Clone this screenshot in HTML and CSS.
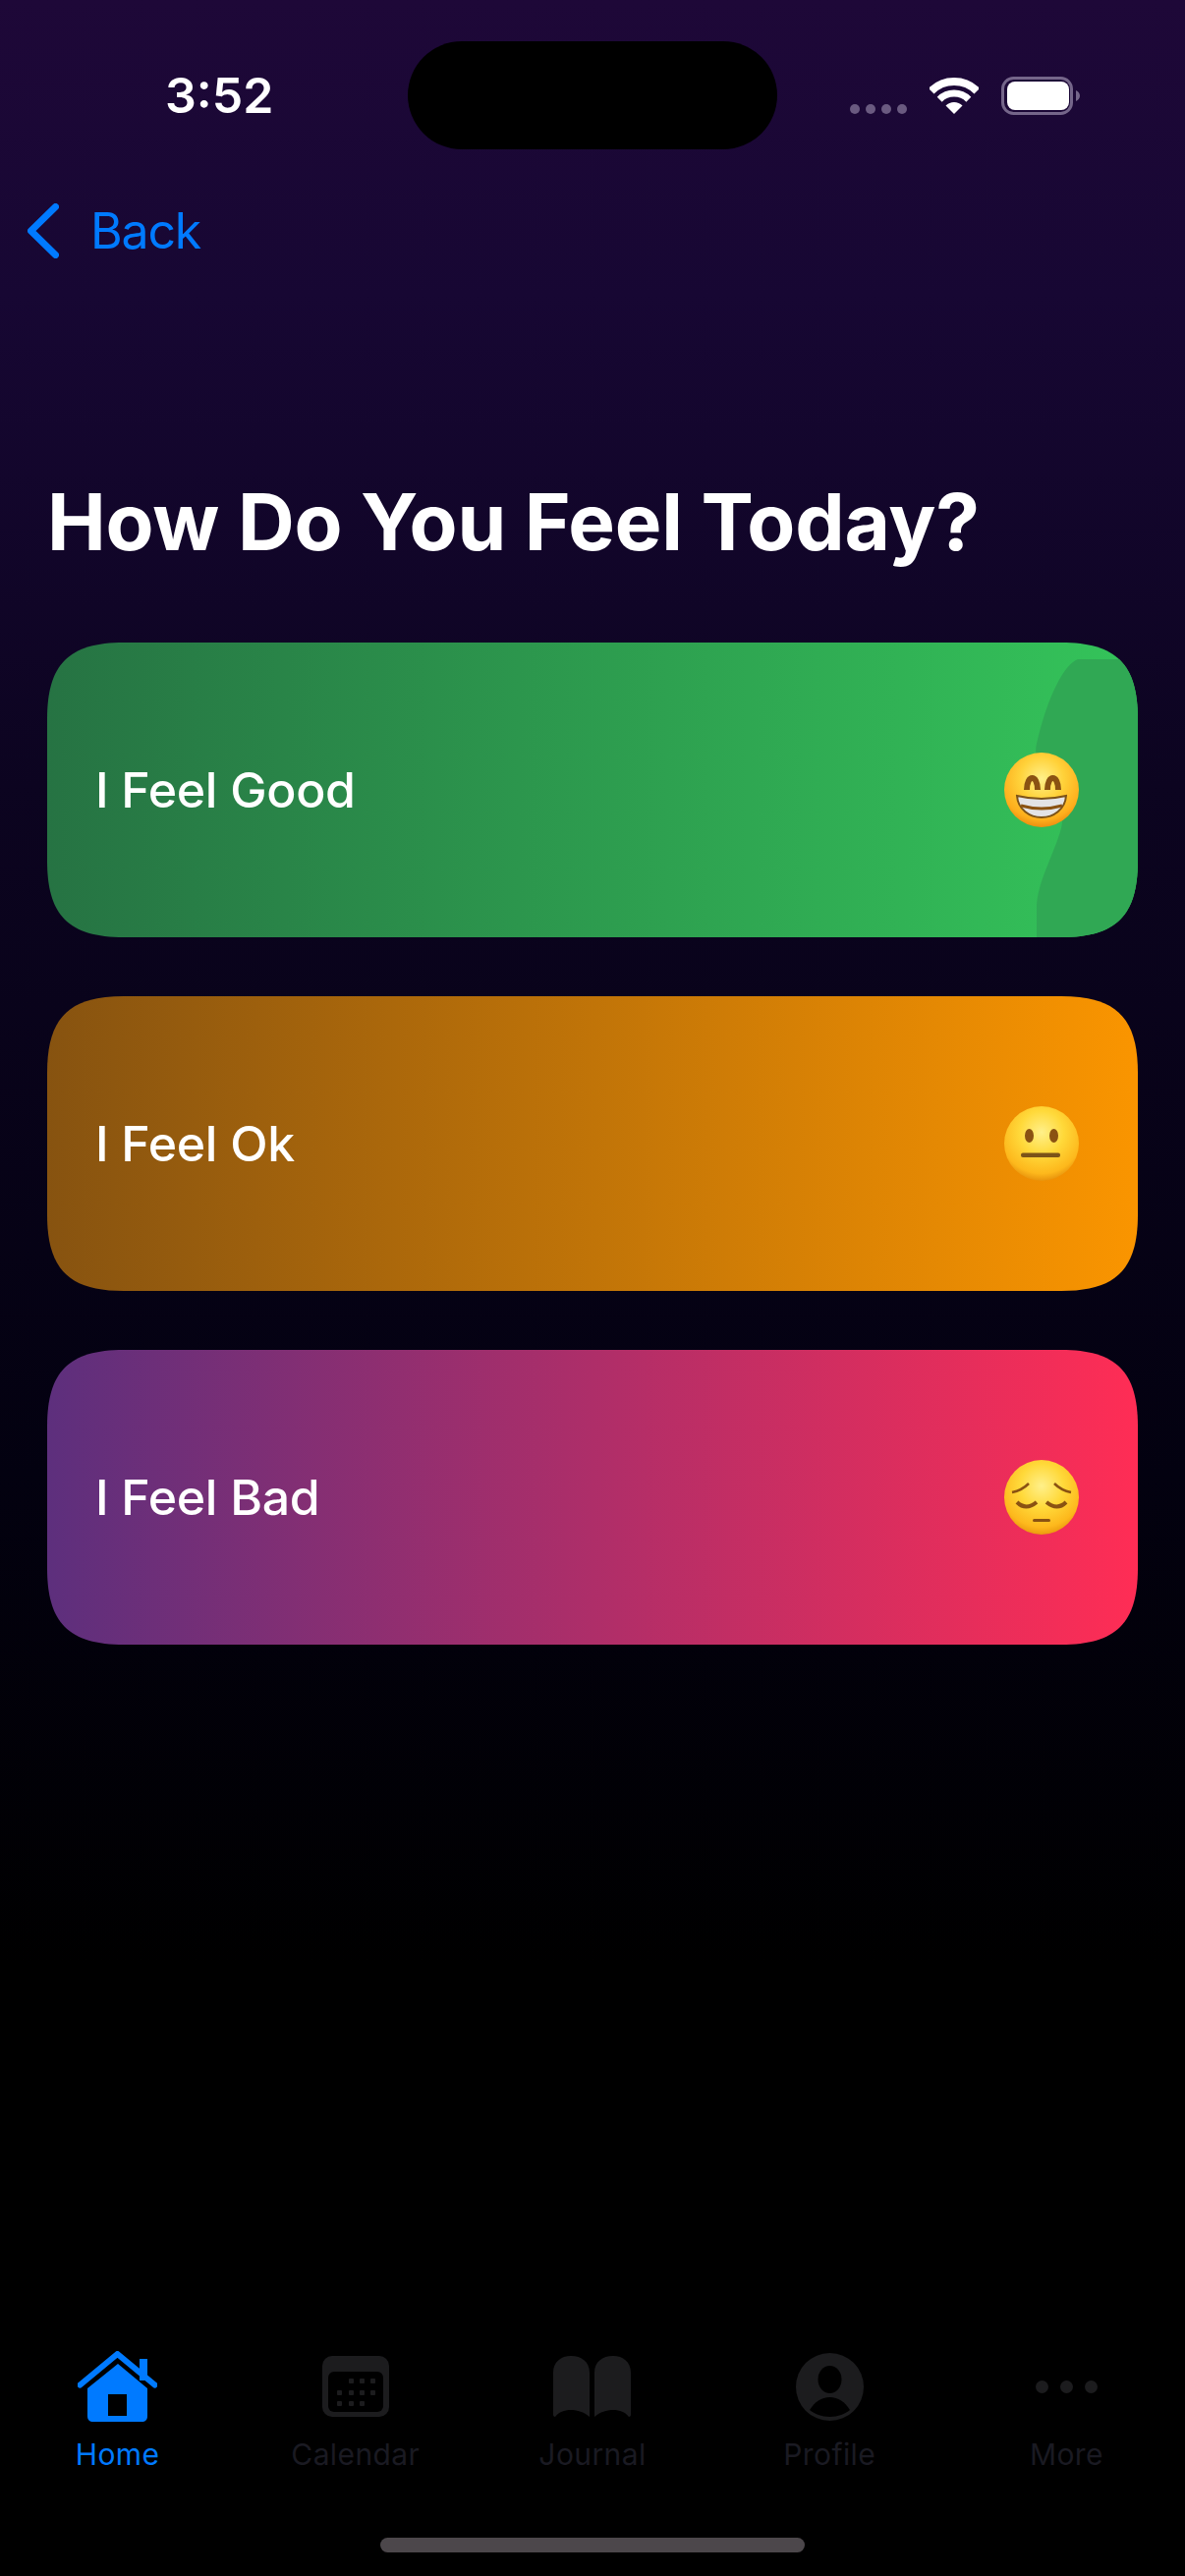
FILE: index.html
```html
<!DOCTYPE html>
<html lang="en">
    <head>
        <meta charset="UTF-8">
        <meta name="viewport" content="width=device-width, initial-scale=1.0">
        <title>How Do You Feel Today?</title>
        <link rel="stylesheet" href="styles.css">
    </head>
    <body>
        <div class="page">
            <!-- status bar -->
            <div class="statusBar">
                <div class="time">3:52</div>
                <div class="island"></div>
                <div class="statusIcons">
                    <div class="signal"><span></span><span></span><span></span><span></span></div>
                    <svg class="wifi" width="50" height="37" viewBox="0 0 50 37">
                        <path d="M1.7 13.7A33 33 0 0 1 48.3 13.7" fill="none" stroke="#fff" stroke-width="8"/>
                        <path d="M10.2 22.2A21 21 0 0 1 39.8 22.2" fill="none" stroke="#fff" stroke-width="7"/>
                        <path d="M25 37L16.5 28.5A12 12 0 0 1 33.5 28.5Z" fill="#fff"/>
                    </svg>
                    <svg class="battery" width="80" height="39" viewBox="0 0 80 39">
                        <rect x="1.5" y="1.5" width="70" height="36" rx="11" fill="none" stroke="#75668a" stroke-width="3"/>
                        <rect x="6" y="5" width="63" height="29" rx="8" fill="#fff"/>
                        <path d="M76 14C78.500 15 80 17 80 19.500C80 22 78.500 24 76 25Z" fill="#75668a"/>
                    </svg>
                </div>
            </div>

            <div class="backRow">
                <svg width="32" height="56" viewBox="0 0 32 56">
                    <path d="M28.500 3.500L3.500 28L28.500 52.500" fill="none" stroke="#007aff" stroke-width="7" stroke-linecap="round" stroke-linejoin="round"/>
                </svg>
                <span>Back</span>
            </div>

            <h1 class="title">How Do You Feel Today?</h1>

            <div class="cards">
                <div class="card cardGood">
                    <svg class="cardShape" width="130" height="300" viewBox="0 0 130 300">
                        <path d="M69 17C55 22 38 55 27 103C20 130 60 160 52 189C45 215 27 245 27 270V300H130V17Z" fill="#30a854"/>
                    </svg>
                    <span class="cardText">I Feel Good</span>
                    <svg class="emoji" width="76" height="76" viewBox="0 0 76 76">
                        <defs>
                            <radialGradient id="faceA" cx="50%" cy="35%" r="65%">
                                <stop offset="0" stop-color="#fff08a"/>
                                <stop offset="0.45" stop-color="#ffd23a"/>
                                <stop offset="0.85" stop-color="#fdae1c"/>
                                <stop offset="1" stop-color="#ec8f10"/>
                            </radialGradient>
                        </defs>
                        <circle cx="38" cy="38" r="38" fill="url(#faceA)"/>
                        <path d="M23 38C23 22 34 22 34 38" fill="none" stroke="#8a5212" stroke-width="6"/>
                        <path d="M44 38C44 22 55 22 55 38" fill="none" stroke="#8a5212" stroke-width="6"/>
                        <path d="M13 44Q38 50 63 44C62 58 50 66 38 66C26 66 14 58 13 44Z" fill="#e3e3e6" stroke="#7c5318" stroke-width="2"/>
                        <path d="M17 54Q38 60 59 54" fill="none" stroke="#8a5212" stroke-width="3"/>
                    </svg>
                </div>
                <div class="card cardOk">
                    <span class="cardText">I Feel Ok</span>
                    <svg class="emoji" width="76" height="76" viewBox="0 0 76 76">
                        <defs>
                            <radialGradient id="faceB" cx="50%" cy="35%" r="65%">
                                <stop offset="0" stop-color="#fff08a"/>
                                <stop offset="0.45" stop-color="#ffd93a"/>
                                <stop offset="0.85" stop-color="#fdb81c"/>
                                <stop offset="1" stop-color="#e8930c"/>
                            </radialGradient>
                        </defs>
                        <circle cx="38" cy="38" r="38" fill="url(#faceB)"/>
                        <ellipse cx="25.500" cy="30" rx="4.500" ry="7" fill="#8a5212"/>
                        <ellipse cx="50.500" cy="30" rx="4.500" ry="7" fill="#8a5212"/>
                        <rect x="17" y="47.500" width="40" height="4.500" rx="2" fill="#7c5318"/>
                    </svg>
                </div>
                <div class="card cardBad">
                    <span class="cardText">I Feel Bad</span>
                    <svg class="emoji" width="76" height="76" viewBox="0 0 76 76">
                        <defs>
                            <radialGradient id="faceC" cx="50%" cy="35%" r="65%">
                                <stop offset="0" stop-color="#fff08a"/>
                                <stop offset="0.45" stop-color="#ffd93a"/>
                                <stop offset="0.85" stop-color="#fdb81c"/>
                                <stop offset="1" stop-color="#eb9a0f"/>
                            </radialGradient>
                        </defs>
                        <circle cx="38" cy="38" r="38" fill="url(#faceC)"/>
                        <path d="M8 33Q18 31 25 24" fill="none" stroke="#8a5212" stroke-width="2.500"/>
                        <path d="M68 33Q58 31 51 24" fill="none" stroke="#8a5212" stroke-width="2.500"/>
                        <path d="M13 43Q22 52 33 43" fill="none" stroke="#8a5212" stroke-width="4"/>
                        <path d="M43 43Q54 52 63 43" fill="none" stroke="#8a5212" stroke-width="4"/>
                        <rect x="29" y="60" width="18" height="3" rx="1.500" fill="#8a5212"/>
                    </svg>
                </div>
            </div>

            <div class="spacer"></div>

            <!-- tab bar -->
            <div class="tabBar">
                <div class="tab active">
                    <div class="tabIcon">
                        <svg width="81" height="72" viewBox="0 0 81 72">
                            <path d="M63 8H71V30H63Z" fill="#007aff"/>
                            <path d="M2.500 34.500L40.500 3L78.500 34.500" fill="none" stroke="#007aff" stroke-width="6" stroke-linecap="round" stroke-linejoin="round"/>
                            <path d="M41 13L71 38V66C71 70 69 72 65 72H16C12 72 10 70 10 66V38Z" fill="#007aff"/>
                            <rect x="31" y="44" width="19" height="22" fill="#000"/>
                        </svg>
                    </div>
                    <span>Home</span>
                </div>
                <div class="tab">
                    <div class="tabIcon">
                        <svg width="68" height="62" viewBox="0 0 68 62">
                            <rect width="68" height="62" rx="10" fill="#1c1c1e"/>
                            <rect x="6" y="16" width="56" height="41" rx="6" fill="#000"/>
                            <g fill="#1c1c1e">
                                <rect x="27" y="23" width="5" height="5" rx="1"/>
                                <rect x="38" y="23" width="5" height="5" rx="1"/>
                                <rect x="49" y="23" width="5" height="5" rx="1"/>
                                <rect x="15" y="35" width="5" height="5" rx="1"/>
                                <rect x="27" y="35" width="5" height="5" rx="1"/>
                                <rect x="38" y="35" width="5" height="5" rx="1"/>
                                <rect x="49" y="35" width="5" height="5" rx="1"/>
                                <rect x="15" y="46" width="5" height="5" rx="1"/>
                                <rect x="27" y="46" width="5" height="5" rx="1"/>
                                <rect x="38" y="46" width="5" height="5" rx="1"/>
                            </g>
                        </svg>
                    </div>
                    <span>Calendar</span>
                </div>
                <div class="tab">
                    <div class="tabIcon">
                        <svg width="79" height="62" viewBox="0 0 79 62">
                            <path d="M0 60V17C0 6 8 0 18 0C29 0 37 6 37 17V62C31 57 25 55 18 55C11 55 6 57 2 62C1 62 0 61 0 60Z" fill="#1c1c1e"/>
                            <path d="M79 60V17C79 6 71 0 61 0C50 0 42 6 42 17V62C48 57 54 55 61 55C68 55 73 57 77 62C78 62 79 61 79 60Z" fill="#1c1c1e"/>
                        </svg>
                    </div>
                    <span>Journal</span>
                </div>
                <div class="tab">
                    <div class="tabIcon">
                        <svg width="69" height="69" viewBox="0 0 69 69">
                            <circle cx="34.500" cy="34.500" r="34.500" fill="#1c1c1e"/>
                            <ellipse cx="34.500" cy="27" rx="12" ry="14" fill="#000"/>
                            <path d="M14 58C19 50 26 45 34.500 45C43 45 50 50 55 58C50 62 43 65 34.500 65C26 65 19 62 14 58Z" fill="#000"/>
                        </svg>
                    </div>
                    <span>Profile</span>
                </div>
                <div class="tab">
                    <div class="tabIcon">
                        <svg width="63" height="13" viewBox="0 0 63 13">
                            <circle cx="6.500" cy="6.500" r="6.500" fill="#1c1c1e"/>
                            <circle cx="31.500" cy="6.500" r="6.500" fill="#1c1c1e"/>
                            <circle cx="56.500" cy="6.500" r="6.500" fill="#1c1c1e"/>
                        </svg>
                    </div>
                    <span>More</span>
                </div>
            </div>

            <div class="homeIndicator"></div>
        </div>
    </body>
</html>
```

FILE: styles.css
```css
* {
    box-sizing: border-box;
}

body {
    margin: 0;
    font-family: Inter, "Liberation Sans", sans-serif;
    background-color: #000;
}

.page {
    display: flex;
    flex-direction: column;
    width: 1206px;
    height: 2622px;
    overflow: hidden;
    background-image: linear-gradient(180deg, #1e0838 0, #170733 300px, #0c0420 800px, #030110 1500px, #000 2000px);
}

/* status bar */
.statusBar {
    display: grid;
    grid-template-columns: 415px 376px 415px;
    align-items: center;
    margin-top: 42px;
    height: 110px;
}

.time {
    padding-left: 168px;
    color: #fff;
    font-size: 50px;
    font-weight: 600;
    line-height: 60px;
}

.island {
    height: 110px;
    background-color: #000;
    border-radius: 55px;
}

.statusIcons {
    display: flex;
    align-items: center;
    padding-left: 74px;
}

.signal {
    display: flex;
    gap: 6px;
    margin-top: 27px;
}

.signal span {
    width: 10px;
    height: 10px;
    border-radius: 50%;
    background-color: #6a5a80;
}

.wifi {
    margin-left: 23px;
}

.battery {
    margin-left: 23px;
}

/* back */
.backRow {
    display: flex;
    align-items: center;
    gap: 32px;
    margin-top: 55px;
    padding-left: 28px;
    color: #007aff;
    font-size: 50px;
    line-height: 56px;
    letter-spacing: -1.2px;
}

.title {
    margin: 218px 0 0;
    padding-left: 48px;
    color: #fff;
    font-size: 80px;
    font-weight: 700;
    line-height: 100px;
    letter-spacing: -0.2px;
}

/* cards */
.cards {
    display: flex;
    flex-direction: column;
    gap: 60px;
    margin-top: 73px;
    padding: 0 48px;
}

.card {
    position: relative;
    display: flex;
    align-items: center;
    justify-content: space-between;
    height: 300px;
    padding: 0 60px 0 49px;
    /* iOS style continuous corners */
    clip-path: path("M78 0H1032C1088 0 1110 22 1110 78V222C1110 278 1088 300 1032 300H78C22 300 0 278 0 222V78C0 22 22 0 78 0Z");
}

.cardGood {
    background-image: linear-gradient(90deg, #267343, #34c45a);
}

.cardOk {
    background-image: linear-gradient(90deg, #875310, #fa9500);
}

.cardBad {
    background-image: linear-gradient(90deg, #5d2f7d, #ff2d55);
}

.cardShape {
    position: absolute;
    top: 0;
    right: 0;
}

.cardText {
    position: relative;
    color: #fff;
    font-size: 50px;
    font-weight: 500;
    letter-spacing: -0.3px;
}

.emoji {
    position: relative;
}

.spacer {
    flex: 1;
}

/* tab bar */
.tabBar {
    display: grid;
    grid-template-columns: repeat(5, 1fr);
}

.tab {
    display: flex;
    flex-direction: column;
    align-items: center;
    gap: 15px;
    color: #1a1a22;
    font-size: 30px;
    line-height: 36px;
    letter-spacing: 0.4px;
}

.tab.active {
    padding-right: 2px;
    color: #007aff;
}

.tabIcon {
    display: flex;
    align-items: center;
    justify-content: center;
    height: 72px;
}

.homeIndicator {
    width: 432px;
    height: 15px;
    margin: 67px auto 24px;
    background-color: #4c474b;
    border-radius: 8px;
}
```
